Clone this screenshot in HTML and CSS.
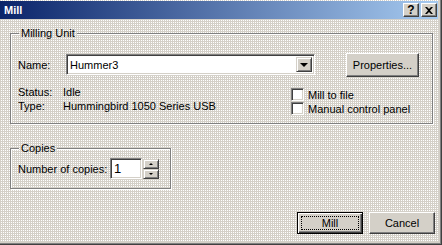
FILE: index.html
```html
<!DOCTYPE html>
<html lang="en">
<head>
    <meta charset="UTF-8">
    <title>Mill</title>
    <link rel="stylesheet" href="styles.css">
</head>
<body>
    <div class="window">
        <div class="titlebar">
            <span class="title">Mill</span>
            <div class="title-buttons">
                <span class="tbtn help">?</span>
                <span class="tbtn close">
                    <svg width="8" height="7" viewBox="0 0 8 7"><path d="M0 0h2l2 2 2-2h2L5 3.5 8 7H6L4 5 2 7H0l3-3.5z" fill="#000"/></svg>
                </span>
            </div>
        </div>

        <div class="content">
            <div class="group unit">
                <span class="group-label">Milling Unit</span>
                <div class="row name-row">
                    <span class="label">Name:</span>
                    <div class="combo">
                        <span class="combo-text">Hummer3</span>
                        <span class="drop"><span class="arrow-down"></span></span>
                    </div>
                    <button class="btn props">Properties...</button>
                </div>
                <div class="row info-row">
                    <div class="info">
                        <div class="line"><span class="label">Status:</span>Idle</div>
                        <div class="line"><span class="label">Type:</span>Hummingbird 1050 Series USB</div>
                    </div>
                    <div class="checks">
                        <label class="check"><span class="box"></span>Mill to file</label>
                        <label class="check"><span class="box"></span>Manual control panel</label>
                    </div>
                </div>
            </div>

            <div class="group copies">
                <span class="group-label">Copies</span>
                <div class="row">
                    <span class="copies-label">Number of copies:</span>
                    <div class="num">1</div>
                    <div class="spin">
                        <span class="spin-btn"><span class="arrow-up"></span></span>
                        <span class="spin-btn"><span class="arrow-down small"></span></span>
                    </div>
                </div>
            </div>

            <div class="actions">
                <button class="btn default"><span class="focus">Mill</span></button>
                <button class="btn">Cancel</button>
            </div>
        </div>
    </div>
</body>
</html>
```

FILE: styles.css
```css
body {
    margin: 0;
    font-family: "Liberation Sans", Arial, sans-serif;
    font-size: 11px;
    color: #000;
}
.window {
    width: 442px;
    height: 245px;
    box-sizing: border-box;
    padding-top: 1px;
    border-right: 1px solid #404040;
    border-bottom: 1px solid #404040;
    box-shadow: inset -1px -1px #808080, inset -2px -2px #d4d0c8;
    background-color: #d4d0c8;
    background-image: repeating-conic-gradient(#ffffff 0 25%, transparent 0 100%);
    background-size: 2px 2px;
    background-attachment: fixed;
}
.titlebar {
    width: 438px;
    height: 18px;
    display: flex;
    align-items: center;
    justify-content: space-between;
    background: linear-gradient(to right, #0a246a, #a6caf0);
}
.title {
    color: #fff;
    font-weight: bold;
    padding-left: 4px;
}
.title-buttons {
    display: flex;
    gap: 2px;
    padding-right: 1px;
}
.tbtn {
    width: 16px;
    height: 14px;
    box-sizing: border-box;
    display: flex;
    align-items: center;
    justify-content: center;
    background: #d4d0c8;
    border: 1px solid;
    border-color: #fff #404040 #404040 #fff;
    box-shadow: inset -1px -1px #808080;
    font-weight: bold;
    font-size: 12px;
}
.content {
    padding: 14px 0 0 10px;
}
.group {
    position: relative;
    border: 1px solid #808080;
    box-shadow: 1px 1px 0 #fff, inset 1px 1px 0 #fff;
    box-sizing: border-box;
}
.group-label {
    position: absolute;
    top: -7px;
    left: 8px;
    padding: 0 2px;
    line-height: 13px;
    background-color: #d4d0c8;
    background-image: repeating-conic-gradient(#ffffff 0 25%, transparent 0 100%);
    background-size: 2px 2px;
    background-attachment: fixed;
}
.unit {
    width: 423px;
    height: 91px;
    padding: 18px 0 0 7px;
}
.row {
    display: flex;
    align-items: center;
}
.label {
    display: inline-block;
    width: 45px;
}
.name-row .label {
    width: 48px;
}
.combo {
    width: 249px;
    height: 21px;
    box-sizing: border-box;
    display: flex;
    align-items: center;
    justify-content: space-between;
    background: #fff;
    border: 1px solid;
    border-color: #808080 #fff #fff #808080;
    box-shadow: inset 1px 1px #404040, inset -1px -1px #d4d0c8;
    padding: 2px 2px 2px 3px;
}
.drop {
    width: 16px;
    height: 15px;
    box-sizing: border-box;
    display: flex;
    align-items: center;
    justify-content: center;
    background: #d4d0c8;
    border: 1px solid;
    border-color: #d4d0c8 #404040 #404040 #d4d0c8;
    box-shadow: inset 1px 1px #fff, inset -1px -1px #808080;
}
.arrow-down {
    width: 0;
    height: 0;
    border-left: 4px solid transparent;
    border-right: 4px solid transparent;
    border-top: 4px solid #000;
}
.arrow-down.small, .arrow-up {
    border-left-width: 2px;
    border-right-width: 2px;
}
.arrow-down.small {
    border-top-width: 2px;
}
.arrow-up {
    width: 0;
    height: 0;
    border-left: 2px solid transparent;
    border-right: 2px solid transparent;
    border-bottom: 2px solid #000;
}
.btn {
    font-family: inherit;
    font-size: 11px;
    color: #000;
    background: #d4d0c8;
    border: 1px solid;
    border-color: #fff #404040 #404040 #fff;
    box-shadow: inset -1px -1px #808080;
    padding: 0;
    box-sizing: border-box;
}
.props {
    width: 73px;
    height: 24px;
    margin: 1px 0 0 31px;
}
.info-row {
    align-items: flex-start;
    margin-top: 11px;
}
.info {
    width: 273px;
    margin-top: -2px;
}
.line {
    line-height: 13px;
}
.line + .line {
    margin-top: 1px;
}
.checks {
    display: flex;
    flex-direction: column;
    gap: 1px;
}
.check {
    display: flex;
    align-items: center;
    gap: 4px;
    height: 13px;
}
.box {
    width: 13px;
    height: 13px;
    box-sizing: border-box;
    background: #fff;
    border: 1px solid;
    border-color: #808080 #fff #fff #808080;
    box-shadow: inset 1px 1px #404040, inset -1px -1px #d4d0c8;
}
.copies {
    width: 161px;
    height: 41px;
    margin-top: 24px;
    padding: 9px 0 0 7px;
}
.copies-label {
    width: 92px;
}
.num {
    width: 32px;
    height: 21px;
    box-sizing: border-box;
    background: #fff;
    border: 1px solid;
    border-color: #808080 #fff #fff #808080;
    box-shadow: inset 1px 1px #404040, inset -1px -1px #d4d0c8;
    padding: 2px 0 0 3px;
    font-size: 13px;
    line-height: 15px;
}
.spin {
    display: flex;
    flex-direction: column;
    margin-left: 1px;
}
.spin-btn {
    width: 16px;
    height: 10px;
    box-sizing: border-box;
    display: flex;
    align-items: center;
    justify-content: center;
    background: #d4d0c8;
    border: 1px solid;
    border-color: #d4d0c8 #404040 #404040 #d4d0c8;
    box-shadow: inset 1px 1px #fff, inset -1px -1px #808080;
}
.actions {
    display: flex;
    justify-content: flex-end;
    gap: 6px;
    margin: 23px 6px 0 0;
}
.actions .btn {
    width: 66px;
    height: 22px;
}
.btn.default {
    border: 1px solid #000;
    box-shadow: inset 1px 1px #fff, inset -1px -1px #404040, inset -2px -2px #808080;
    padding: 3px;
}
.focus {
    display: flex;
    align-items: center;
    justify-content: center;
    height: 100%;
    outline: 1px dotted #000;
    outline-offset: -1px;
}
```
